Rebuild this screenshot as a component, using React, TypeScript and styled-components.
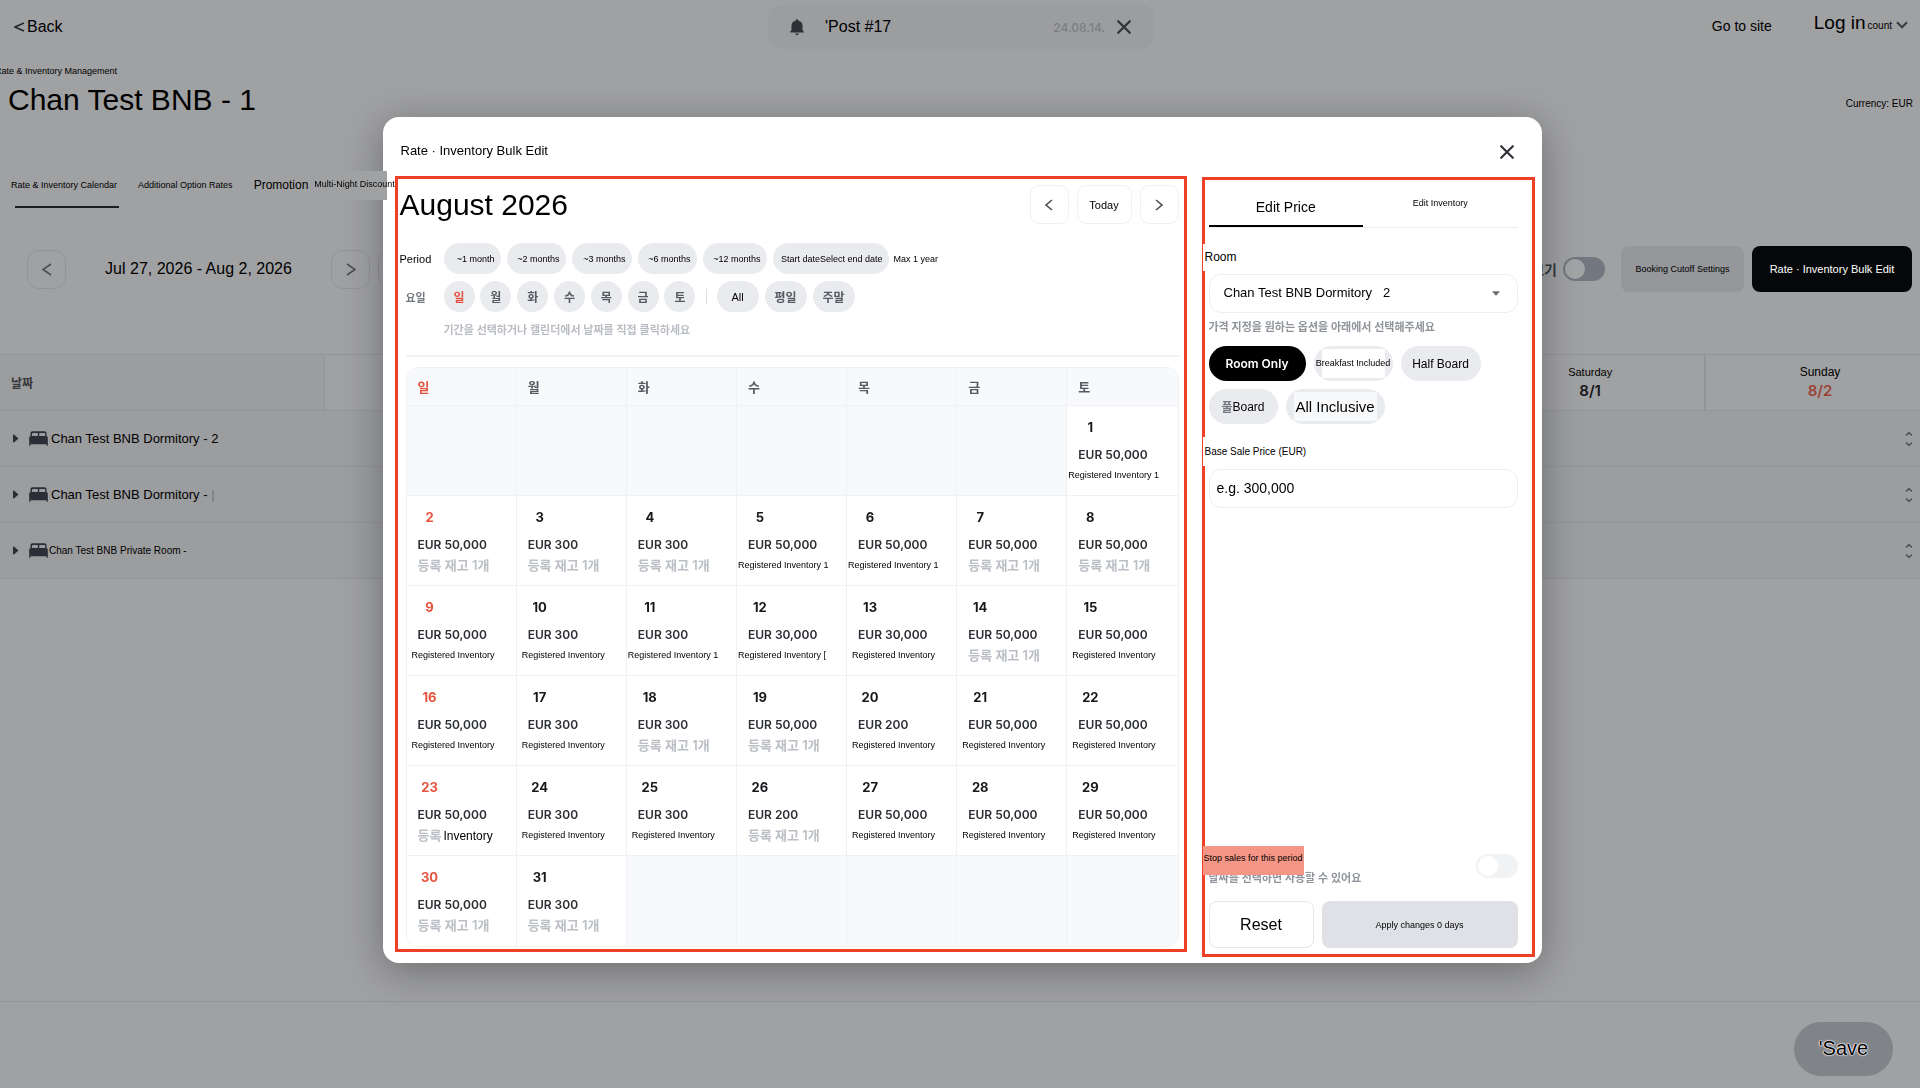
import React from "react";
import styled, { createGlobalStyle } from "styled-components";

const sans = `"Liberation Sans", Arial, "Noto Sans CJK KR", sans-serif`;
const ui = `Inter, "Noto Sans CJK KR", sans-serif`;

const Global = createGlobalStyle`
  *, *::before, *::after { box-sizing: border-box; }
  body { margin: 0; background: #a0a1a3; color: #000; font-family: ${sans}; overflow: hidden; }
  button, input, select { font-family: inherit; color: inherit; margin: 0; }
  button { padding: 0; border: 0; background: none; cursor: pointer; }
  h1, h2, p { margin: 0; font-weight: 400; }
`;

/* ---------- Page ---------- */
const Page = styled.div`
  min-height: 100vh;
  display: flex;
  flex-direction: column;
  overflow: hidden;
`;
const TopBar = styled.header`
  display: grid;
  grid-template-columns: 1fr 386px 1fr;
  align-items: center;
  height: 54px;
  padding: 0 12px 0 14px;
`;
const BackLink = styled.a`
  display: flex;
  align-items: center;
  gap: 2px;
  color: inherit;
  text-decoration: none;
  font-size: 16px;
`;
const Notice = styled.div`
  display: flex;
  align-items: center;
  height: 44px;
  padding: 0 23px 0 22px;
  border-radius: 12px;
  background: #9c9d9f;
  font-size: 16px;
`;
const NoticeText = styled.span`
  flex: 1;
  padding-left: 21px;
`;
const NoticeDate = styled.time`
  font: 500 12px ${ui};
  color: #7b7e84;
  margin-right: 12px;
`;
const IconButton = styled.button`
  display: grid;
  place-items: center;
`;
const Account = styled.nav`
  display: flex;
  align-items: center;
  justify-content: flex-end;
  font-size: 14px;
  a { color: inherit; text-decoration: none; padding-bottom: 2px; }
`;
const LoginButton = styled.button`
  display: flex;
  align-items: baseline;
  margin-left: 42px;
  padding-bottom: 9px;
  font-size: 19px;
  small { font-size: 10px; margin: 0 4px 0 2px; }
`;
const Heading = styled.div`
  display: flex;
  justify-content: space-between;
  align-items: flex-end;
  height: 67px;
  padding: 0 7px 0 8px;
`;
const Crumb = styled.p`
  font-size: 9px;
  line-height: 12px;
  margin: 0 0 2px -13px;
  white-space: nowrap;
`;
const Title = styled.h1`
  font-size: 30px;
  line-height: 42px;
`;
const Currency = styled.span`
  font-size: 10px;
  line-height: 34px;
`;
const Tabs = styled.nav`
  display: flex;
  align-items: center;
  height: 30px;
  margin-top: 49px;
  padding-left: 11px;
`;
const Tab = styled.a<{ $size?: number; $gap?: number }>`
  color: inherit;
  text-decoration: none;
  white-space: nowrap;
  font-size: ${(p) => p.$size ?? 9}px;
  margin-right: ${(p) => p.$gap ?? 21}px;
`;
const RaisedTab = styled(Tab)`
  position: relative;
  z-index: 20;
  width: 75px;
  padding: 8px 0 11px 2px;
  background: #a0a1a3;
`;
const TabMark = styled.div`
  width: 104px;
  height: 2px;
  margin: 6px 0 0 15px;
  background: #1c1d1f;
`;
const Toolbar = styled.div`
  display: flex;
  justify-content: space-between;
  align-items: center;
  height: 46px;
  margin: 38px 8px 0 27px;
`;
const Group = styled.div<{ $gap?: number }>`
  display: flex;
  align-items: center;
  gap: ${(p) => p.$gap ?? 8}px;
`;
const SquareButton = styled.button<{ $dim?: boolean; $wide?: boolean }>`
  display: grid;
  place-items: center;
  width: ${(p) => (p.$wide ? 55 : 39)}px;
  height: 39px;
  border: 1px solid ${(p) => (p.$dim ? "#939497" : "#f0f1f3")};
  border-radius: ${(p) => (p.$dim ? 12 : 9)}px;
  font-size: 11px;
`;
const DateRange = styled.span`
  width: 249px;
  text-align: center;
  font-size: 16px;
`;
const SwitchLabel = styled.label`
  display: flex;
  align-items: center;
  gap: 6px;
  margin-right: 8px;
  font: 600 14px ${ui};
  color: #34373c;
`;
const Switch = styled.input<{ $track: string; $knob: string }>`
  appearance: none;
  margin: 0;
  width: 42px;
  height: 24px;
  padding: 2px;
  border-radius: 12px;
  background: ${(p) => p.$track};
  &::before {
    content: "";
    display: block;
    width: 20px;
    height: 20px;
    border-radius: 50%;
    background: ${(p) => p.$knob};
  }
`;
const ActionButton = styled.button<{ $primary?: boolean }>`
  height: 46px;
  width: ${(p) => (p.$primary ? 160 : 123)}px;
  border-radius: 8px;
  background: ${(p) => (p.$primary ? "#060708" : "#96979b")};
  color: ${(p) => (p.$primary ? "#fff" : "#000")};
  font-size: ${(p) => (p.$primary ? 11 : 9)}px;
`;
const RateTable = styled.table`
  width: calc(100% + 14px);
  margin-top: 62px;
  table-layout: fixed;
  border-spacing: 0;
  border-top: 1px solid #949598;
  th, td { padding: 0; height: 56px; border-bottom: 1px solid #949598; }
  thead th { font-weight: 400; }
  thead th:nth-child(n + 3) { border-left: 2px solid #939497; }
  thead th:first-child { width: 325px; background: #9c9d9f; border-right: 1px solid #949598; }
  tbody { background: #9c9d9f; }
`;
const DateHead = styled.span`
  display: block;
  padding-left: 11px;
  text-align: left;
  font: 700 12px ${ui};
  color: #34373c;
`;
const DayHead = styled.span<{ $sunday?: boolean }>`
  display: block;
  line-height: 16px;
  font-size: ${(p) => (p.$sunday ? 12 : 11)}px;
  b {
    display: block;
    font: 600 15px/22px ${ui};
    color: ${(p) => (p.$sunday ? "#9c4238" : "#17181b")};
  }
`;
const RoomName = styled.div<{ $small?: boolean }>`
  display: flex;
  align-items: center;
  padding-left: 13px;
  font-size: ${(p) => (p.$small ? 10 : 13)}px;
  span { margin-left: ${(p) => (p.$small ? 1 : 3)}px; }
  i { color: #75777b; font-style: normal; }
  svg + svg { margin-left: 10px; }
`;
const SortCell = styled.div`
  display: flex;
  justify-content: flex-end;
  padding-right: 21px;
`;
const Footer = styled.footer`
  display: flex;
  justify-content: flex-end;
  align-items: center;
  height: 87px;
  margin-top: auto;
  padding: 7px 27px 0;
  border-top: 1px solid #949598;
`;
const SaveButton = styled.button`
  width: 99px;
  height: 54px;
  border-radius: 27px;
  background: #808388;
  font-size: 20px;
  text-shadow: 0 0 1px #fff, 0 0 1px #fff, 0 0 2px #fff, 0 0 2px #fff;
`;

/* ---------- Dialog ---------- */
const Overlay = styled.div`
  position: fixed;
  inset: 0;
  z-index: 10;
  display: flex;
  justify-content: center;
  align-items: center;
  padding: 0 20px 8px 24px;
`;
const Dialog = styled.section`
  width: 100%;
  max-width: 1159px;
  padding: 0 7px 6px 12px;
  border-radius: 16px;
  background: #fff;
  box-shadow: 0 8px 40px rgba(0, 0, 0, 0.32);
`;
const DialogHead = styled.div`
  display: flex;
  align-items: center;
  justify-content: space-between;
  height: 59px;
  padding: 11px 21px 0 6px;
  h2 { font-size: 13px; padding-bottom: 4px; }
`;
const Columns = styled.div`
  display: grid;
  grid-template-columns: minmax(0, 1fr) 333px;
  align-items: start;
  gap: 15px;
`;
const Frame = styled.div`
  display: flex;
  flex-direction: column;
  border: 3px solid #ee4027;
`;
const CalendarPane = styled(Frame)`
  padding: 6px 5px 2px 0;
`;
const MonthBar = styled.div`
  display: flex;
  justify-content: space-between;
  align-items: center;
`;
const Month = styled.h2`
  font-size: 30px;
  line-height: 38px;
  padding-left: 2px;
`;
const FilterRow = styled.div<{ $last?: boolean }>`
  display: flex;
  align-items: center;
  height: ${(p) => (p.$last ? 22 : 31)}px;
  margin-bottom: ${(p) => (p.$last ? 0 : 7)}px;
`;
const Filters = styled.div`
  padding-top: 19px;
`;
const FilterLabel = styled.span<{ $ko?: boolean }>`
  width: 46px;
  padding-left: ${(p) => (p.$ko ? 8 : 2)}px;
  font: ${(p) => (p.$ko ? `600 11px ${ui}` : `400 11px ${sans}`)};
  color: ${(p) => (p.$ko ? "#74787f" : "#000")};
`;
const Pill = styled.button<{ $w: number; $ko?: boolean; $red?: boolean }>`
  width: ${(p) => p.$w}px;
  height: 31px;
  border-radius: 16px;
  background: #eaebef;
  text-align: center;
  white-space: nowrap;
  font: ${(p) => (p.$ko ? `600 12px ${ui}` : `400 11px ${sans}`)};
  color: ${(p) => (p.$red ? "#e5533f" : p.$ko ? "#565a61" : "#000")};
`;
const RangePill = styled(Pill)`
  font-size: 9px;
  text-align: right;
  padding-right: 6px;
`;
const Weekdays = styled.div`
  display: flex;
  justify-content: space-between;
  width: 252px;
`;
const Divider = styled.i`
  width: 1px;
  height: 15px;
  margin: 0 10px;
  background: #dcdee2;
`;
const MaxNote = styled.span`
  margin-left: 5px;
  font-size: 9px;
`;
const Hint = styled.p<{ $light?: boolean }>`
  font: 600 11px/16px ${ui};
  color: ${(p) => (p.$light ? "#b9bdc3" : "#8f949b")};
`;
const FieldHint = styled(Hint)`
  margin-top: 6px;
`;
const Rule = styled.hr`
  height: 2px;
  width: calc(100% - 8px);
  margin: 14px 0 10px 8px;
  border: 0;
  background: #f2f3f5;
`;
const Calendar = styled.table`
  width: calc(100% - 8px);
  margin-left: 8px;
  table-layout: fixed;
  border-spacing: 0;
  border: 1px solid #f0f1f4;
  border-radius: 12px;
  overflow: hidden;
  th, td { padding: 0; border-right: 1px solid #f0f1f4; border-bottom: 1px solid #f0f1f4; }
  th:last-child, td:last-child { border-right: 0; }
  tr:last-child td { border-bottom: 0; }
`;
const WeekHead = styled.th<{ $red: boolean }>`
  height: 38px;
  background: #f8f9fb;
  text-align: left;
  font: 600 13px ${ui};
  color: ${(p) => (p.$red ? "#e5533f" : "#565a61")};
  span { padding-left: 11px; }
`;
const Cell = styled.td<{ $empty: boolean }>`
  height: 90px;
  vertical-align: top;
  background: ${(p) => (p.$empty ? "#f8f9fb" : "#fff")};
`;
const Day = styled.div<{ $red: boolean }>`
  width: 24px;
  margin: 10px 0 6px 11px;
  text-align: center;
  font: 700 13px/22px ${ui};
  color: ${(p) => (p.$red ? "#e5533f" : "#17181b")};
`;
const Price = styled.div`
  padding-left: 11px;
  font: 600 12px/22px ${ui};
  color: #2b2e33;
`;
const Stock = styled.div<{ $kind: string }>`
  line-height: 18px;
  white-space: nowrap;
  padding-left: ${(p) => (p.$kind === "ko" || p.$kind === "mix" ? 11 : p.$kind === "en" ? 5 : 1)}px;
  font-size: 9px;
  span { font: 600 13px/18px ${ui}; color: #bbbfc5; }
  b { font: 400 12px/18px ${sans}; margin-left: 2px; }
`;

const EditPane = styled(Frame)`
  min-height: 780px;
  margin-top: 1px;
  padding: 8px 14px 6px 4px;
`;
const EditTabs = styled.div`
  display: grid;
  grid-template-columns: 1fr 1fr;
  height: 40px;
  border-bottom: 1px solid #eceef0;
`;
const EditTab = styled.button<{ $active?: boolean }>`
  padding-bottom: ${(p) => (p.$active ? 0 : 9)}px;
  border-bottom: ${(p) => (p.$active ? "2px solid #000" : "0")};
  font-size: ${(p) => (p.$active ? 14 : 9)}px;
`;
const FieldLabel = styled.label<{ $small?: boolean }>`
  position: relative;
  align-self: flex-start;
  margin: ${(p) => (p.$small ? 13 : 16)}px 0 3px -6px;
  padding: 0 2px;
  background: #fff;
  font-size: ${(p) => (p.$small ? 10 : 12)}px;
  line-height: ${(p) => (p.$small ? 29 : 27)}px;
`;
const SelectWrap = styled.div`
  display: flex;
  align-items: center;
  svg { margin-left: -26px; pointer-events: none; }
`;
const Select = styled.select`
  appearance: none;
  width: 100%;
  height: 39px;
  padding: 0 32px 2px 14px;
  border: 1px solid #eceef0;
  border-radius: 12px;
  background: #fff;
  font-size: 13px;
`;
const Input = styled.input`
  width: 100%;
  height: 39px;
  padding: 0 7px 2px;
  border: 1px solid #eceef0;
  border-radius: 12px;
  font-size: 14px;
  &::placeholder { color: #000; }
`;
const Chips = styled.div`
  display: flex;
  flex-wrap: wrap;
  gap: 8px;
  margin-top: 11px;
`;
const Chip = styled.button<{ $w: number; $size?: number; $active?: boolean }>`
  display: flex;
  align-items: center;
  justify-content: center;
  width: ${(p) => p.$w}px;
  height: 35px;
  border-radius: 18px;
  background: ${(p) => (p.$active ? "#000" : "#eaebef")};
  color: ${(p) => (p.$active ? "#fff" : "#000")};
  font: ${(p) => (p.$active ? `600 12px ${ui}` : `400 ${p.$size ?? 12}px ${sans}`)};
  white-space: nowrap;
  i { font: 600 12px ${ui}; color: #74787f; }
`;
const Patch = styled.span<{ $w: number; $bg: string }>`
  display: flex;
  justify-content: center;
  width: ${(p) => p.$w}px;
  line-height: 29px;
  background: ${(p) => p.$bg};
`;
const StopRow = styled.div`
  display: flex;
  justify-content: space-between;
  align-items: center;
  margin-top: auto;
`;
const StopLabel = styled.label`
  position: relative;
  z-index: 1;
  display: flex;
  justify-content: center;
  width: 101px;
  height: 29px;
  margin: 0 0 -5px -6px;
  background: #f59586;
  font-size: 9px;
  line-height: 25px;
  white-space: nowrap;
`;
const Buttons = styled.div`
  display: grid;
  grid-template-columns: 105px 1fr;
  gap: 8px;
  margin-top: 15px;
`;
const ResetButton = styled.button`
  height: 47px;
  border: 1px solid #e4e6ea;
  border-radius: 8px;
  font-size: 16px;
`;
const ApplyButton = styled.button`
  height: 47px;
  border-radius: 8px;
  background: #dfe1e6;
  font-size: 9px;
`;

/* ---------- Icons ---------- */
const Chevron = ({ dir, w = 9, h = 14, color = "#4b4e55" }: { dir: "left" | "right"; w?: number; h?: number; color?: string }) => (
  <svg width={w} height={h} viewBox={`0 0 ${w} ${h}`} fill="none" stroke={color} strokeWidth="1.6" aria-hidden>
    <path d={dir === "left" ? `M${w - 1} 1L1 ${h / 2}L${w - 1} ${h - 1}` : `M1 1L${w - 1} ${h / 2}L1 ${h - 1}`} />
  </svg>
);
const Cross = () => (
  <svg width="14" height="14" viewBox="0 0 14 14" stroke="#303338" strokeWidth="2.2" strokeLinecap="round" aria-hidden>
    <path d="M1.2 1.2L12.8 12.8M12.8 1.2L1.2 12.8" />
  </svg>
);
const Bell = () => (
  <svg width="14" height="17" viewBox="0 0 14 17" fill="#2d3035" aria-hidden>
    <path d="M7 0.3c.7 0 1.1.5 1.1 1.1 2.8.5 4.400 2.400 4.400 5v4.700l1.200 1.500v.9H.3v-.9l1.200-1.500V6.400c0-2.600 1.600-4.500 4.400-5C5.900.8 6.300.3 7 .3zM5.400 14.500h3.200c0 .9-.7 1.700-1.600 1.700s-1.600-.8-1.600-1.700z" />
  </svg>
);
const Bed = () => (
  <svg width="19" height="15" viewBox="0 0 19 15" aria-hidden>
    <path fill="#2b2f35" d="M1.500 5V2.200C1.500 1 2.400.3 3.400.3h12.200c1 0 1.900.7 1.900 1.900V5c.8.300 1.300 1 1.300 1.900v7.800h-1.300v-1.500H1.500v1.500H.2V6.900C.2 6 .7 5.300 1.500 5z" />
    <path fill="#9c9d9f" d="M3 5V3c0-.7.400-1.100 1-1.100h3.900c.6 0 1 .4 1 1.100v2zM10.200 5V3c0-.7.400-1.100 1-1.100H15.200c.6 0 1 .4 1 1.100v2z" />
  </svg>
);
const RowArrow = () => (
  <svg width="6" height="9" viewBox="0 0 6 9" fill="#2b2f35" aria-hidden>
    <path d="M0 1.200Q0 0 1 .6L5 4Q5.600 4.500 5 5L1 8.400Q0 9 0 7.800z" />
  </svg>
);
const Sort = () => (
  <svg width="8" height="16" viewBox="0 0 8 16" fill="none" stroke="#505359" strokeWidth="1.700" aria-hidden>
    <path d="M1 4.500L4 1.700L7 4.500M1 11.500L4 14.300L7 11.500" />
  </svg>
);

/* ---------- Data ---------- */
const week = ["일", "월", "화", "수", "목", "금", "토"];
type Entry = [price: string, stock: "ko" | "en" | "one" | "open" | "mix"];
const A = "50,000";
const entries: Entry[] = [
  [A, "one"],
  [A, "ko"], ["300", "ko"], ["300", "ko"], [A, "one"], [A, "one"], [A, "ko"], [A, "ko"],
  [A, "en"], ["300", "en"], ["300", "one"], ["30,000", "open"], ["30,000", "en"], [A, "ko"], [A, "en"],
  [A, "en"], ["300", "en"], ["300", "ko"], [A, "ko"], ["200", "en"], [A, "en"], [A, "en"],
  [A, "mix"], ["300", "en"], ["300", "en"], ["200", "ko"], [A, "en"], [A, "en"], [A, "en"],
  [A, "ko"], ["300", "ko"],
];
const ranges: [string, number][] = [
  ["~1 month", 57], ["~2 months", 59], ["~3 months", 60], ["~6 months", 59], ["~12 months", 64], ["Start dateSelect end date", 116],
];

const StockText = ({ kind }: { kind: Entry[1] }) => (
  <Stock $kind={kind}>
    {kind === "ko" && <span>등록 재고 1개</span>}
    {kind === "mix" && <><span>등록</span><b>Inventory</b></>}
    {kind === "en" && "Registered Inventory"}
    {kind === "one" && "Registered Inventory 1"}
    {kind === "open" && "Registered Inventory ["}
  </Stock>
);

export default function App() {
  const rooms = ["Chan Test BNB Dormitory - 2", "Chan Test BNB Dormitory - ", "Chan Test BNB Private Room -"];
  return (
    <>
      <Global />
      <Page>
        <TopBar>
          <BackLink href="#"><Chevron dir="left" w={11} h={10} color="#26282c" />Back</BackLink>
          <Notice>
            <Bell />
            <NoticeText>'Post #17</NoticeText>
            <NoticeDate>24.08.14.</NoticeDate>
            <IconButton aria-label="Dismiss"><Cross /></IconButton>
          </Notice>
          <Account>
            <a href="#">Go to site</a>
            <LoginButton>
              Log in<small>count</small>
              <svg width="12" height="8" viewBox="0 0 12 8" fill="none" stroke="#3b3e44" strokeWidth="2.200" aria-hidden><path d="M1 1.200L6 6.200L11 1.200" /></svg>
            </LoginButton>
          </Account>
        </TopBar>
        <Heading>
          <div>
            <Crumb>Rate &amp; Inventory Management</Crumb>
            <Title>Chan Test BNB - 1</Title>
          </div>
          <Currency>Currency: EUR</Currency>
        </Heading>
        <Tabs>
          <Tab href="#">Rate &amp; Inventory Calendar</Tab>
          <Tab href="#">Additional Option Rates</Tab>
          <Tab href="#" $size={12} $gap={4}>Promotion</Tab>
          <RaisedTab href="#">Multi-Night Discount</RaisedTab>
        </Tabs>
        <TabMark />
        <Toolbar>
          <Group>
            <SquareButton $dim aria-label="Previous week"><Chevron dir="left" w={10} h={13} /></SquareButton>
            <DateRange>Jul 27, 2026 - Aug 2, 2026</DateRange>
            <SquareButton $dim aria-label="Next week"><Chevron dir="right" w={10} h={13} /></SquareButton>
            <SquareButton $dim aria-label="Calendar" />
          </Group>
          <Group>
            <SwitchLabel>보기<Switch type="checkbox" $track="#73777f" $knob="#a3a4a6" /></SwitchLabel>
            <ActionButton>Booking Cutoff Settings</ActionButton>
            <ActionButton $primary>Rate · Inventory Bulk Edit</ActionButton>
          </Group>
        </Toolbar>
        <RateTable>
          <thead>
            <tr>
              <th><DateHead>날짜</DateHead></th>
              <th /><th /><th /><th /><th />
              <th><DayHead>Saturday<b>8/1</b></DayHead></th>
              <th><DayHead $sunday>Sunday<b>8/2</b></DayHead></th>
            </tr>
          </thead>
          <tbody>
            {rooms.map((r, i) => (
              <tr key={r}>
                <td><RoomName $small={i === 2}><RowArrow /><Bed /><span>{r}{i === 1 && <i>|</i>}</span></RoomName></td>
                <td colSpan={7}><SortCell><Sort /></SortCell></td>
              </tr>
            ))}
          </tbody>
        </RateTable>
        <Footer><SaveButton>'Save</SaveButton></Footer>
      </Page>

      <Overlay>
        <Dialog role="dialog" aria-labelledby="bulk-title">
          <DialogHead>
            <h2 id="bulk-title">Rate · Inventory Bulk Edit</h2>
            <IconButton aria-label="Close"><Cross /></IconButton>
          </DialogHead>
          <Columns>
            <CalendarPane>
              <MonthBar>
                <Month>August 2026</Month>
                <Group>
                  <SquareButton aria-label="Previous month"><Chevron dir="left" w={8} h={12} /></SquareButton>
                  <SquareButton $wide>Today</SquareButton>
                  <SquareButton aria-label="Next month"><Chevron dir="right" w={8} h={12} /></SquareButton>
                </Group>
              </MonthBar>
              <Filters>
                <FilterRow>
                  <FilterLabel>Period</FilterLabel>
                  <Group $gap={6}>
                    {ranges.map(([t, w]) => <RangePill key={t} $w={w}>{t}</RangePill>)}
                  </Group>
                  <MaxNote>Max 1 year</MaxNote>
                </FilterRow>
                <FilterRow>
                  <FilterLabel $ko>요일</FilterLabel>
                  <Weekdays>
                    {week.map((d, i) => <Pill key={d} $w={31} $ko $red={i === 0}>{d}</Pill>)}
                  </Weekdays>
                  <Divider />
                  <Group $gap={6}>
                    <Pill $w={42}>All</Pill>
                    <Pill $w={42} $ko>평일</Pill>
                    <Pill $w={42} $ko>주말</Pill>
                  </Group>
                </FilterRow>
                <FilterRow $last>
                  <FilterLabel />
                  <Hint $light>기간을 선택하거나 캘린더에서 날짜를 직접 클릭하세요</Hint>
                </FilterRow>
              </Filters>
              <Rule />
              <Calendar>
                <thead>
                  <tr>{week.map((d, i) => <WeekHead key={d} $red={i === 0}><span>{d}</span></WeekHead>)}</tr>
                </thead>
                <tbody>
                  {[0, 1, 2, 3, 4, 5].map((w) => (
                    <tr key={w}>
                      {week.map((d, i) => {
                        const day = w * 7 + i - 5;
                        const e = entries[day - 1];
                        return (
                          <Cell key={d} $empty={!e}>
                            {e && (
                              <>
                                <Day $red={i === 0}>{day}</Day>
                                <Price>EUR {e[0]}</Price>
                                <StockText kind={e[1]} />
                              </>
                            )}
                          </Cell>
                        );
                      })}
                    </tr>
                  ))}
                </tbody>
              </Calendar>
            </CalendarPane>

            <EditPane>
              <EditTabs>
                <EditTab $active>Edit Price</EditTab>
                <EditTab>Edit Inventory</EditTab>
              </EditTabs>
              <FieldLabel htmlFor="room">Room</FieldLabel>
              <SelectWrap>
                <Select id="room"><option>{"Chan Test BNB Dormitory\u00a0\u00a0\u00a02"}</option></Select>
                <svg width="8" height="5" viewBox="0 0 8 5" fill="#6b7079" aria-hidden><path d="M1 .2h6q1 0 .4.800L4.600 4.300q-.6.600-1.200 0L.6 1Q0 .2 1 .2z" /></svg>
              </SelectWrap>
              <FieldHint>가격 지정을 원하는 옵션을 아래에서 선택해주세요</FieldHint>
              <Chips>
                <Chip $w={97} $active>Room Only</Chip>
                <Chip $w={79} $size={9}><Patch $w={63} $bg="#fff">Breakfast Included</Patch></Chip>
                <Chip $w={80}>Half Board</Chip>
                <Chip $w={69}><i>풀</i>Board</Chip>
                <Chip $w={99} $size={15}><Patch $w={83} $bg="#f8f9fb">All Inclusive</Patch></Chip>
              </Chips>
              <FieldLabel $small htmlFor="price">Base Sale Price (EUR)</FieldLabel>
              <Input id="price" placeholder="e.g. 300,000" />
              <StopRow>
                <div>
                  <StopLabel htmlFor="stop">Stop sales for this period</StopLabel>
                  <Hint>날짜를 선택하면 사용할 수 있어요</Hint>
                </div>
                <Switch id="stop" type="checkbox" $track="#f1f2f4" $knob="#fff" />
              </StopRow>
              <Buttons>
                <ResetButton>Reset</ResetButton>
                <ApplyButton>Apply changes 0 days</ApplyButton>
              </Buttons>
            </EditPane>
          </Columns>
        </Dialog>
      </Overlay>
    </>
  );
}
